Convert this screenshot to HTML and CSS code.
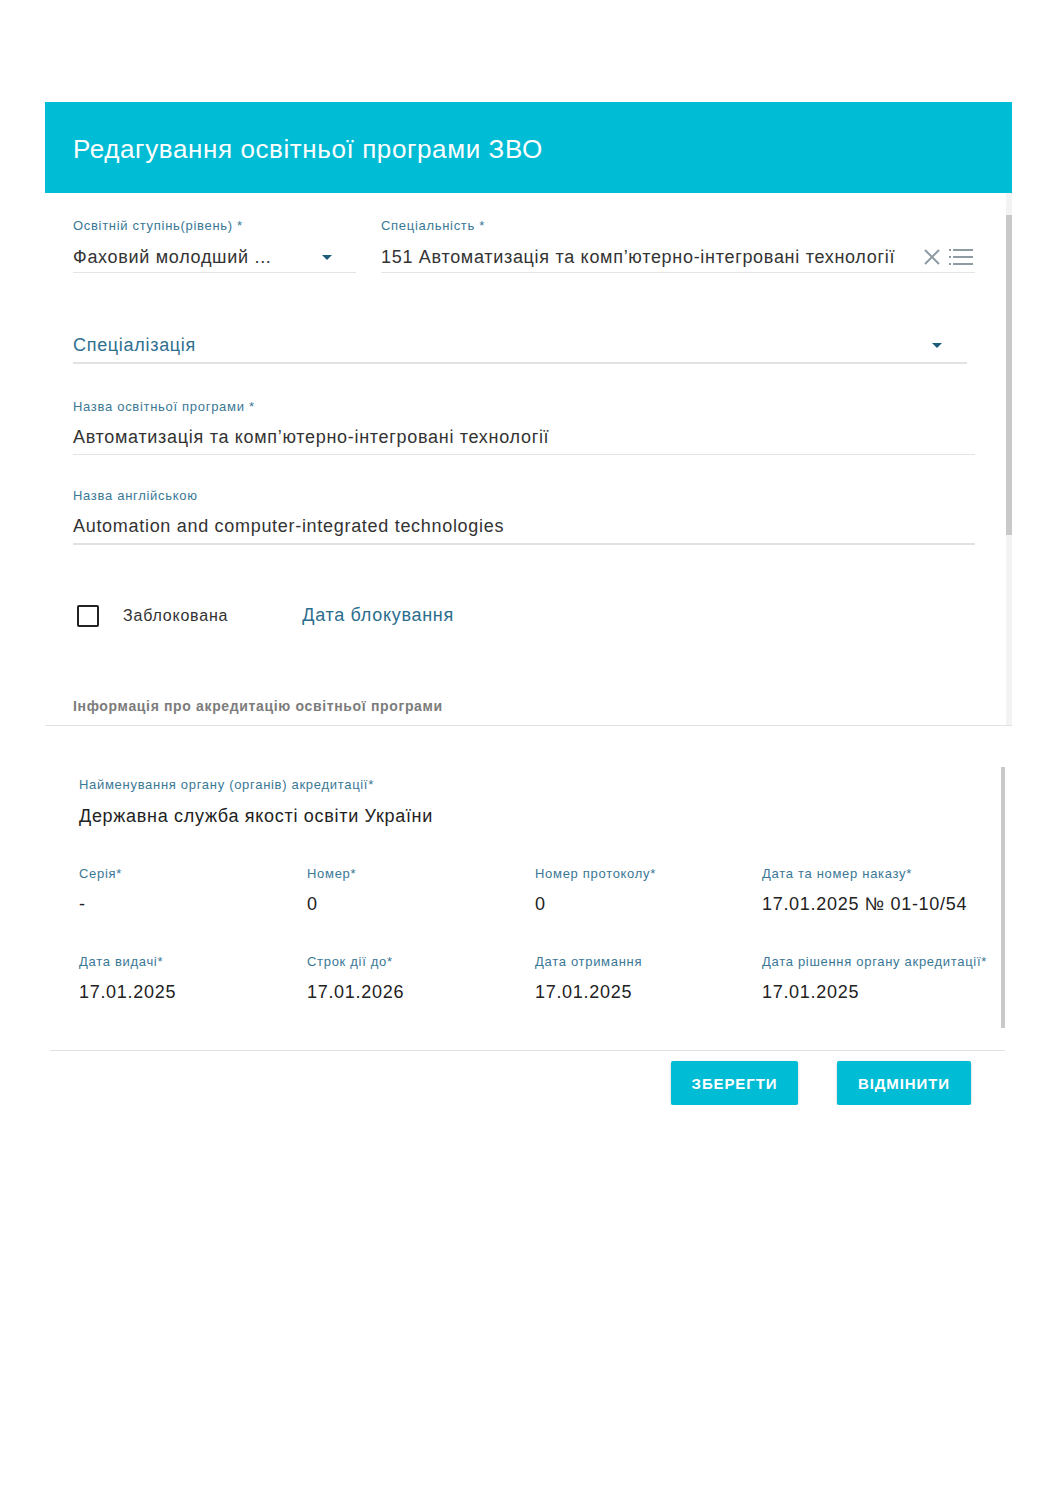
FILE: index.html
```html
<!DOCTYPE html>
<html lang="uk">
<head>
<meta charset="utf-8">
<title>Редагування освітньої програми ЗВО</title>
<link rel="stylesheet" href="styles.css">
</head>
<body>
<div class="dialog">
  <div class="header"><h1 class="title">Редагування освітньої програми ЗВО</h1></div>

  <div class="panel">
    <div class="row1">
      <div class="field f-level">
        <div class="label">Освітній ступінь(рівень) *</div>
        <div class="value with-arrow">
          <span class="text">Фаховий молодший ...</span>
          <span class="arrow"></span>
        </div>
      </div>
      <div class="field f-spec">
        <div class="label">Спеціальність *</div>
        <div class="value with-icons">
          <span class="text">151 Автоматизація та комп’ютерно-інтегровані технології</span>
          <span class="icons">
            <svg class="ic-x" width="18" height="18" viewBox="0 0 18 18"><path d="M2 2 L16 16 M16 2 L2 16" stroke="#8f9ba3" stroke-width="2" fill="none"/></svg>
            <svg class="ic-list" width="24" height="18" viewBox="0 0 24 18"><g fill="#8f9ba3"><rect x="0" y="1" width="2" height="2"/><rect x="0" y="8" width="2" height="2"/><rect x="0" y="15" width="2" height="2"/><rect x="4" y="1" width="20" height="2"/><rect x="4" y="8" width="20" height="2"/><rect x="4" y="15" width="20" height="2"/></g></svg>
          </span>
        </div>
      </div>
    </div>

    <div class="field f-specialization thick">
      <div class="placeholder with-arrow">
        <span class="text">Спеціалізація</span>
        <span class="arrow"></span>
      </div>
    </div>

    <div class="field f-name">
      <div class="label">Назва освітньої програми *</div>
      <div class="value">Автоматизація та комп’ютерно-інтегровані технології</div>
    </div>

    <div class="field f-eng thick">
      <div class="label">Назва англійською</div>
      <div class="value">Automation and computer-integrated technologies</div>
    </div>

    <div class="check-row">
      <span class="checkbox"></span>
      <span class="check-label">Заблокована</span>
      <span class="block-date">Дата блокування</span>
    </div>

    <div class="info">Інформація про акредитацію освітньої програми</div>

    <div class="scroll-track"><div class="scroll-thumb"></div></div>
  </div>

  <div class="panel2">
    <div class="label">Найменування органу (органів) акредитації*</div>
    <div class="big-value">Державна служба якості освіти України</div>

    <div class="grid">
      <div class="cell"><div class="label">Серія*</div><div class="cell-value">-</div></div>
      <div class="cell"><div class="label">Номер*</div><div class="cell-value">0</div></div>
      <div class="cell"><div class="label">Номер протоколу*</div><div class="cell-value">0</div></div>
      <div class="cell"><div class="label">Дата та номер наказу*</div><div class="cell-value">17.01.2025 № 01-10/54</div></div>
      <div class="cell"><div class="label">Дата видачі*</div><div class="cell-value">17.01.2025</div></div>
      <div class="cell"><div class="label">Строк дії до*</div><div class="cell-value">17.01.2026</div></div>
      <div class="cell"><div class="label">Дата отримання</div><div class="cell-value">17.01.2025</div></div>
      <div class="cell"><div class="label">Дата рішення органу акредитації*</div><div class="cell-value">17.01.2025</div></div>
    </div>

    <div class="scroll-thumb2"></div>
  </div>

  <div class="actions">
    <button class="btn">ЗБЕРЕГТИ</button>
    <button class="btn btn-cancel">ВІДМІНИТИ</button>
  </div>
</div>
</body>
</html>
```

FILE: styles.css
```css
* { box-sizing: border-box; }

html, body {
  margin: 0;
  padding: 0;
  background: #ffffff;
  font-family: "Liberation Sans", Arial, sans-serif;
  color: #333333;
  letter-spacing: 0.7px;
}

.dialog {
  margin: 102px 0 0 45px;
  width: 967px;
}

.header {
  height: 91px;
  background: #00bcd4;
  display: flex;
  align-items: center;
  padding-left: 28px;
}

.title {
  margin: 0;
  font-size: 26px;
  font-weight: normal;
  color: #ffffff;
  line-height: 30px;
  padding-top: 3px;
  letter-spacing: 0.6px;
}

.panel {
  position: relative;
  height: 533px;
  border-bottom: 1px solid #e2e2e2;
  padding: 25px 37px 0 28px;
}

.label {
  font-size: 13px;
  line-height: 16px;
  height: 16px;
  color: #3a7896;
  white-space: nowrap;
}

.field {
  border-bottom: 1px solid #e4e4e4;
}

.field.thick {
  border-bottom: 2px solid #e2e2e2;
}

.value {
  font-size: 18px;
  line-height: 24px;
  color: #333333;
  white-space: nowrap;
}

.row1 {
  display: flex;
  gap: 25px;
}

.f-level { width: 283px; }
.f-spec { flex: 1; min-width: 0; }

.row1 .value {
  margin-top: 11px;
  padding-bottom: 3px;
}

.with-arrow, .with-icons {
  display: flex;
  align-items: center;
}

.with-arrow .text, .with-icons .text {
  flex: 1;
  overflow: hidden;
}

.arrow {
  width: 0;
  height: 0;
  border-left: 5px solid transparent;
  border-right: 5px solid transparent;
  border-top: 5px solid #1d5c7c;
}

.f-level .arrow { margin-right: 24px; }

.icons {
  display: flex;
  align-items: center;
  gap: 8px;
  margin-right: 2px;
}

.f-specialization {
  margin-top: 59px;
  margin-right: 8px;
}

.placeholder {
  font-size: 18px;
  line-height: 26px;
  color: #2f6f8f;
  padding-bottom: 4px;
}

.f-specialization .arrow { margin-right: 25px; }

.f-name { margin-top: 35px; }
.f-name .value { margin-top: 10px; padding-bottom: 5px; }

.f-eng { margin-top: 33px; }
.f-eng .value { margin-top: 10px; padding-bottom: 5px; }

.check-row {
  margin-top: 59px;
  height: 24px;
  display: flex;
  align-items: center;
}

.checkbox {
  width: 22px;
  height: 22px;
  margin-left: 4px;
  border: 2.5px solid #222222;
  border-radius: 2px;
}

.check-label {
  margin-left: 24px;
  font-size: 16px;
  color: #333333;
  letter-spacing: 0.8px;
}

.block-date {
  margin-left: 74px;
  font-size: 18px;
  color: #2b6d8d;
  margin-top: -2px;
}

.info {
  margin-top: 69px;
  font-size: 14px;
  line-height: 18px;
  font-weight: bold;
  color: #7c7c7c;
  letter-spacing: 0.65px;
}

.scroll-track {
  position: absolute;
  top: 0;
  right: 0;
  width: 6px;
  height: 100%;
  background: #f3f3f3;
}

.scroll-thumb {
  margin-top: 22px;
  height: 320px;
  background: #c9c9c9;
}

.panel2 {
  position: relative;
  margin-left: 5px;
  width: 955px;
  padding: 51px 0 45px 29px;
  border-bottom: 1px solid #e2e2e2;
}

.big-value {
  margin-top: 10px;
  font-size: 18px;
  line-height: 26px;
  color: #222222;
}

.grid {
  display: grid;
  grid-template-columns: 228px 228px 227px 1fr;
  row-gap: 37px;
  margin-top: 37px;
}

.cell-value {
  margin-top: 9px;
  font-size: 18px;
  line-height: 26px;
  color: #222222;
  white-space: nowrap;
}

.scroll-thumb2 {
  position: absolute;
  top: 41px;
  right: 0;
  width: 4px;
  height: 261px;
  background: #c9c9c9;
}

.actions {
  display: flex;
  justify-content: flex-end;
  gap: 39px;
  padding-right: 41px;
  margin-top: 10px;
}

.btn {
  height: 44px;
  width: 127px;
  border: none;
  border-radius: 2px;
  background: #00bcd4;
  color: #ffffff;
  font-family: "Liberation Sans", Arial, sans-serif;
  font-size: 15px;
  font-weight: bold;
  letter-spacing: 0.9px;
  box-shadow: 0 1px 3px rgba(0, 0, 0, 0.2);
}

.btn-cancel { width: 134px; }
```
